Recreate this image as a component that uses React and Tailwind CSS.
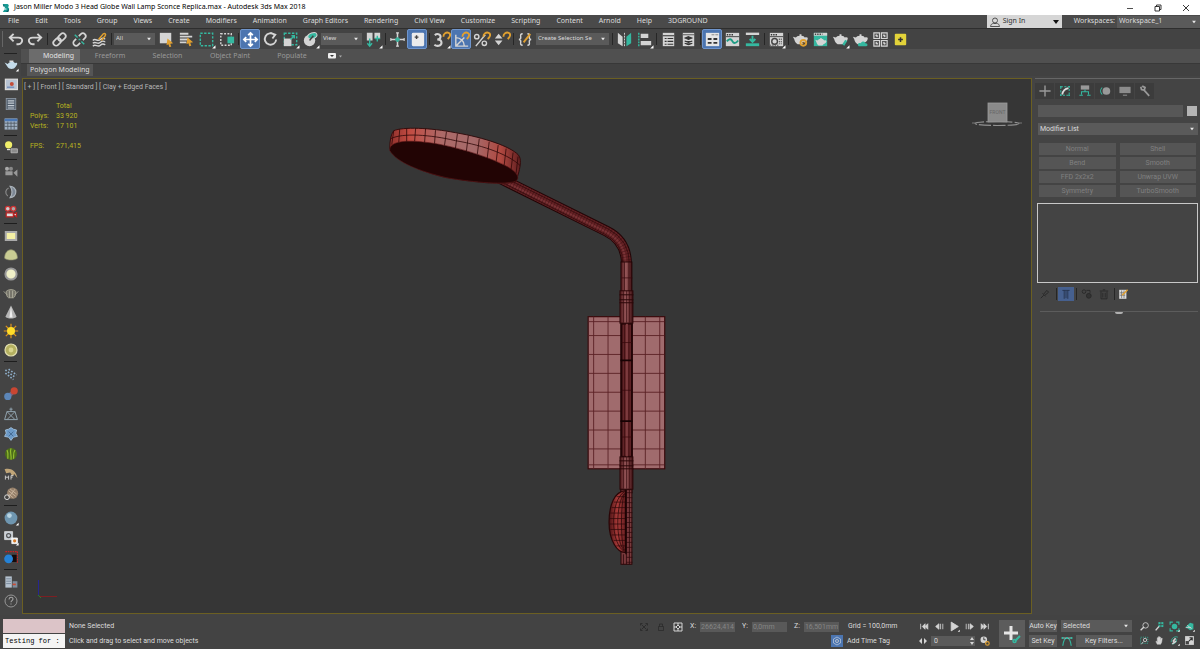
import React from "react";

const W = "#d4d4d4";
const T = "#35b8a0";
const O = "#e0a030";

function Icon({ children, size = "size-5", label }) {
  return (
    <svg viewBox="0 0 20 20" className={`${size} shrink-0`} fill="none" stroke={W} strokeWidth="1.5" aria-label={label} role="img">
      {children}
    </svg>
  );
}

const Corner = () => <path d="M19.500 16v3.500h-3.500z" fill="#fff" stroke="none" />;
const Teapot = ({ fill = W }) => (
  <path d="M2 7l3 1c1-1 2-2 4-2V4.500h2V6c2 0 3 1 3.500 2 3-1 4 .5 2.500 3-.8 1.300-2 2-3.500 2.500L12 15H7c-2-1-3-3-3.500-5z" fill={fill} stroke="none" />
);
const Win = () => (
  <>
    <rect x="3" y="3" width="14" height="14" fill={W} stroke="none" />
    <path d="M4 5h1.500M6.500 5H8M9 5h1.500" stroke="#333" strokeWidth="1.500" />
    <path d="M3 7h14" stroke="#444" strokeWidth="1" />
  </>
);
const Magnet = () => <path d="M10 7c0-3 3-5 5.500-4s2 4-1 6.500" stroke={O} strokeWidth="2" />;

const toolIcons = {
  Undo: <path d="M4 8h9c3 0 4 2 4 3s-1 4-4 4h-2M8 4L4 8l4 4" strokeWidth="2" />,
  Redo: <path d="M16 8H7c-3 0-4 2-4 3s1 4 4 4h2M12 4l4 4-4 4" strokeWidth="2" />,
  Link: (
    <g transform="rotate(-45 10 10)" strokeWidth="1.8">
      <rect x="2" y="7" width="9" height="6" rx="3" />
      <rect x="9" y="7" width="9" height="6" rx="3" />
    </g>
  ),
  Unlink: (
    <>
      <g transform="rotate(-45 10 10)" strokeWidth="1.800">
        <path d="M8 7H5a3 3 0 0 0 0 6h3M12 7h3a3 3 0 0 1 0 6h-3" />
      </g>
      <path d="M5 5l3 3M12 12l3 3M9 10h2" stroke={T} />
    </>
  ),
  "Bind to Space Warp": (
    <>
      <path d="M3 11c3-3 5 2 8-1s4 0 5-1M3 14c3-3 5 2 8-1s4 0 5-1M3 17c3-3 5 2 8-1s4 0 5-1" />
      <path d="M9 10l5-6c2-1 3 1 2 2l-4 5" stroke={O} />
    </>
  ),
  "Select Object": (
    <>
      <rect x="3" y="3" width="12" height="11" fill={W} stroke="none" />
      <path d="M11 9l6 5-3 .5 1 3-2 .5-1-3-2 1z" fill={O} stroke="none" />
    </>
  ),
  "Select by Name": (
    <>
      <path d="M3 4h9M3 7h13M3 10h9M3 13h7" strokeWidth="2" />
      <path d="M11 8l6 5-3 .5 1 3-2 .5-1-3-2 1z" fill={O} stroke="none" />
    </>
  ),
  "Rectangular Region": (
    <>
      <rect x="3.500" y="3.500" width="13" height="13" stroke={T} strokeDasharray="2.500 1.500" />
      <Corner />
    </>
  ),
  "Window Crossing": (
    <>
      <rect x="4" y="4" width="11" height="12" strokeDasharray="2 1.500" />
      <rect x="11" y="7" width="7" height="7" fill={T} stroke="none" />
    </>
  ),
  Move: <path d="M10 3v14M3 10h14M7.500 5.500L10 3l2.500 2.500M7.500 14.500L10 17l2.500-2.500M5.500 7.500L3 10l2.500 2.500M14.500 7.500L17 10l-2.500 2.500" stroke="#fff" strokeWidth="1.800" />,
  Rotate: <path d="M14 5a6 6 0 1 0 2 5M10 3l5 2-3 4" strokeWidth="2" />,
  Scale: (
    <>
      <rect x="3.500" y="3.500" width="13" height="12" stroke={T} strokeDasharray="2.500 1.500" />
      <rect x="3" y="9" width="8" height="8" fill={W} stroke="none" />
      <path d="M10 10l4-4M11 6h3v3" stroke={T} />
      <Corner />
    </>
  ),
  Place: (
    <>
      <circle cx="9" cy="11" r="6" fill={W} stroke="none" />
      <ellipse cx="12" cy="6" rx="5" ry="3" fill={T} stroke={W} strokeWidth="1" transform="rotate(-20 12 6)" />
      <path d="M9 11l4-5" stroke="#444" />
      <Corner />
    </>
  ),
  "Pivot Center": (
    <>
      <path d="M3 3h6v8H3zM11 3h6v6h-6z" fill={W} stroke="none" />
      <path d="M6 9v8M3.500 14L6 17l2.500-3M14 12V6M11.500 9H17" stroke={T} />
      <Corner />
    </>
  ),
  Manipulate: (
    <>
      <path d="M10 3v14M3 10h14" strokeWidth="1.600" />
      <path d="M7.500 10h5M10 7.500v5" stroke={T} strokeWidth="2" />
      <path d="M3 8.500v3M17 8.500v3M8.500 3h3M8.500 17h3" strokeWidth="1.200" />
    </>
  ),
  "Keyboard Override": (
    <>
      <rect x="4" y="3" width="13" height="14" rx="1.500" fill="#ececec" stroke="none" />
      <path d="M9 5.500v4M7 7.500h4" stroke="#444" />
    </>
  ),
  "Snap Toggle": (
    <>
      <path d="M3 5.500c2-2 6-1.500 6 1.500 0 2-2 3-3.500 3C8 10 10 11 10 13.500c0 3.500-5 4-7.500 2" strokeWidth="2.200" />
      <g transform="translate(2 0)"><Magnet /></g>
      <Corner />
    </>
  ),
  "Angle Snap": (
    <>
      <path d="M4 5v12h13M4 17L13 8M4 8c5 0 9 4 9 9" strokeWidth="1.500" />
      <g transform="translate(1 0)"><Magnet /></g>
    </>
  ),
  "Percent Snap": (
    <>
      <circle cx="5" cy="7" r="2.300" />
      <circle cx="13" cy="14" r="2.300" />
      <path d="M4 17L14 5" />
      <g transform="translate(2 0)"><Magnet /></g>
    </>
  ),
  "Spinner Snap": (
    <>
      <path d="M3 9l4-5 4 5zM3 11l4 5 4-5z" fill={W} stroke="none" />
      <g transform="translate(2 0)"><Magnet /></g>
    </>
  ),
  "Edit Selection Sets": (
    <>
      <path d="M7 4c-3 0-2 2-2 4 0 1-1 2-2 2 1 0 2 1 2 2 0 2-1 4 2 4M12 4c3 0 2 2 2 4 0 1 1 2 2 2-1 0-2 1-2 2 0 2 1 4-2 4" />
      <path d="M8 13l7-9" stroke={O} strokeWidth="2" />
    </>
  ),
  Mirror: (
    <>
      <path d="M3 3l5 4v10l-5-3z" fill={W} stroke="none" />
      <path d="M17 3l-5 4v10l5-3z" fill={T} stroke="none" />
      <path d="M10 3v14" strokeDasharray="2 1" strokeWidth="1" />
    </>
  ),
  Align: (
    <>
      <path d="M4 3v14" stroke={T} strokeDasharray="2 1" />
      <path d="M6 4h8v4.500H6zM6 11.500h11V16H6z" fill={W} stroke="none" />
      <Corner />
    </>
  ),
  "Layer Explorer": (
    <>
      <rect x="4" y="3" width="12" height="14" fill={W} stroke="none" />
      <path d="M4 6h12M6 9h2M6 12h2M6 15h2M9 9h6M9 12h6M9 15h6" stroke="#333" strokeWidth="1.200" />
    </>
  ),
  "Toggle Layers": (
    <>
      <rect x="4" y="3" width="12" height="14" fill={W} stroke="none" />
      <path d="M4 5h12" stroke="#555" strokeWidth="1" />
      <path d="M10 7l3.500 1.500L10 10 6.500 8.500zM6 11.500l4 1.500 4-1.500M6 14l4 1.500L14 14" fill="#333" stroke="#333" strokeWidth="1.200" />
    </>
  ),
  "Toggle Ribbon": (
    <>
      <rect x="3" y="3" width="14" height="14" fill="#e6e6e6" stroke="none" />
      <path d="M9 5h7" stroke="#888" strokeWidth="1" strokeDasharray="3 1" />
      <path d="M5 9.500h4M11 9.500h4M5 13.500h4M11 13.500h4" stroke="#333" strokeWidth="2" />
    </>
  ),
  "Curve Editor": (
    <>
      <Win />
      <path d="M4 12c3-4 5-2 6 0s3 3 6-1" stroke="#1e9c84" strokeWidth="2" />
    </>
  ),
  "Schematic View": (
    <>
      <path d="M3 4h14" strokeWidth="2.500" />
      <path d="M3 15.500h14" stroke={T} strokeWidth="3" />
      <path d="M10 6v6M7 9.500l3 3 3-3" stroke={T} strokeWidth="2" />
    </>
  ),
  "Material Editor": (
    <>
      <Win />
      <circle cx="8" cy="12" r="3" stroke="#444" />
      <path d="M13 9v6M15 9v6M3 16h9" stroke="#444" strokeWidth="1" strokeDasharray="1.500 1" />
      <Corner />
    </>
  ),
  "Render Setup": (
    <>
      <Teapot />
      <circle cx="13" cy="13.500" r="3" stroke={O} strokeWidth="2" />
      <circle cx="13" cy="13.500" r="1.200" fill="#8a5c12" stroke="none" />
    </>
  ),
  "Rendered Frame": (
    <>
      <rect x="3" y="3" width="14" height="14" fill={T} stroke="none" />
      <path d="M3 4.500h14" strokeWidth="3" />
      <path d="M4 4.500h8" stroke="#444" strokeDasharray="1.500 1" />
      <g transform="translate(3 5) scale(.75)"><Teapot /></g>
    </>
  ),
  Render: (
    <>
      <Teapot />
      <path d="M13 16l3-5" stroke={T} strokeWidth="2.500" />
      <Corner />
    </>
  ),
  "Cloud Render": (
    <>
      <Teapot />
      <path d="M8 17c-2-3 1-4 2-3 2-3 5-2 5 0 3 0 3 3 1 3z" fill={T} stroke="none" />
    </>
  ),
  Gallery: (
    <>
      <path d="M3 3h6v6H3zM11 3h6v6h-6zM3 11h6v6H3zM11 11h6v6h-6z" fill="#555" strokeWidth="1.200" />
      <path d="M5 5l2 2M13 5l2 2M5 13l2 2M13 13l2 2" strokeWidth="1.800" />
    </>
  ),
  "3DGROUND tools": (
    <>
      <rect x="4" y="4" width="12" height="12" rx="1" fill="#e3d33a" stroke="none" />
      <path d="M10 7.500v5M7.500 10h5" stroke="#333" strokeWidth="1.600" />
    </>
  ),
};

function Tool({ name, active }) {
  return (
    <button
      aria-label={name}
      className={`flex size-5 shrink-0 items-center justify-center ${active ? "rounded-xs border border-[#6f95cc] bg-[#4c75b0]" : ""}`}
    >
      <Icon size="size-[19px]" label={name}>{toolIcons[name]}</Icon>
    </button>
  );
}

const Tools = ({ names, active = [] }) => names.map((n) => <Tool key={n} name={n} active={active.includes(n)} />);
const Sep = () => (
  <span className="flex w-1 shrink-0 justify-center">
    <span className="h-3 w-px bg-[#262626]" />
  </span>
);

function Combo({ label, value, className }) {
  return (
    <span className={`relative block shrink-0 ${className}`}>
      <select aria-label={label} className="block size-full appearance-none bg-[#5a5a5a] px-[2px] text-[#dadada] outline-none">
        <option>{value}</option>
      </select>
      <svg viewBox="0 0 4 3" className="pointer-events-none absolute top-1/2 right-1 h-[3px] w-1 -translate-y-1/2">
        <path d="M0 0h4L2 3z" fill="#e8e8e8" />
      </svg>
    </span>
  );
}

const menus = ["File", "Edit", "Tools", "Group", "Views", "Create", "Modifiers", "Animation", "Graph Editors", "Rendering", "Civil View", "Customize", "Scripting", "Content", "Arnold", "Help", "3DGROUND"];

function TitleBar() {
  return (
    <header className="flex h-[15px] items-center bg-white pl-[2px] text-black">
      <svg viewBox="0 0 10 12" className="mr-1 h-3 w-2" aria-hidden="true">
        <path d="M1 1h5c3 0 3 3 1.500 4C10 6 9 11 5 11H1l2-3h2c1 0 1-1.500 0-1.500H3L4 4H2z" fill="#169a94" />
        <path d="M1 1l3 3H2zM5 11l4-4-1 4z" fill="#0b5f66" />
      </svg>
      <h1 className="font-['Noto_Sans',sans-serif] text-[7px]">Jason Miller Modo 3 Head Globe Wall Lamp Sconce Replica.max - Autodesk 3ds Max 2018</h1>
      <div className="ml-auto flex gap-5 pr-[10px]">
        <button aria-label="Minimize"><svg viewBox="0 0 8 8" className="size-2"><path d="M1 4.500h6" stroke="#222" strokeWidth=".8" /></svg></button>
        <button aria-label="Restore"><svg viewBox="0 0 8 8" className="size-2" fill="none" stroke="#222" strokeWidth=".9"><path d="M1 2.500h4.500V7H1zM2.500 2.500V1H7v4.500H5.500" /></svg></button>
        <button aria-label="Close"><svg viewBox="0 0 8 8" className="size-2" stroke="#222" strokeWidth=".9"><path d="M1 1l6 6M7 1L1 7" /></svg></button>
      </div>
    </header>
  );
}

function MenuBar() {
  return (
    <nav className="flex h-[14px] items-center border-b border-[#2e2e2e] bg-[#4a4a4a] pl-2 font-['Noto_Sans',sans-serif] text-[7px] text-[#dedede]">
      <div className="flex gap-4">
        {menus.map((m) => <button key={m} className="whitespace-nowrap">{m}</button>)}
      </div>
      <button className="ml-auto flex h-full w-[75px] items-center bg-[#d6d6d6] px-[3px] text-[#333]">
        <svg viewBox="0 0 10 10" className="mr-[3px] size-[10px]" fill="none" stroke="#444" strokeWidth=".9"><circle cx="5" cy="3.500" r="2.500" /><path d="M.5 9.500C1 6.500 3 6.500 3.500 6.500h3c1 0 2.500 0 3 3z" /></svg>
        Sign In
        <svg viewBox="0 0 6 4" className="ml-auto h-1 w-[6px]"><path d="M0 0h6L3 4z" fill="#111" /></svg>
      </button>
      <label className="ml-3 flex h-full items-center gap-[2px]">
        Workspaces:
        <Combo label="Workspaces" value="Workspace_1" className="h-3 w-[83px]" />
      </label>
    </nav>
  );
}

function MainToolbar() {
  return (
    <div className="flex h-5 items-center bg-[#434343] pl-[2px] font-['Noto_Sans',sans-serif] text-[6px]">
      <span className="mr-[2px] h-4 w-px bg-[#666]" />
      <Tools names={["Undo", "Redo"]} />
      <Sep />
      <Tools names={["Link", "Unlink", "Bind to Space Warp"]} />
      <Sep />
      <Combo label="Selection filter" value="All" className="mx-px mb-px h-3 w-[41px]" />
      <Tools names={["Select Object", "Select by Name", "Rectangular Region", "Window Crossing"]} />
      <Sep />
      <Tools names={["Move", "Rotate", "Scale", "Place"]} active={["Move"]} />
      <Combo label="Reference coordinate system" value="View" className="mx-px mb-px h-3 w-[41px]" />
      <Tools names={["Pivot Center"]} />
      <Sep />
      <Tools names={["Manipulate", "Keyboard Override"]} active={["Keyboard Override"]} />
      <Sep />
      <Tools names={["Snap Toggle", "Angle Snap", "Percent Snap", "Spinner Snap"]} active={["Angle Snap"]} />
      <Sep />
      <Tools names={["Edit Selection Sets"]} />
      <Combo label="Named selection sets" value="Create Selection Se" className="mx-px mb-px h-3 w-[73px]" />
      <Sep />
      <Tools names={["Mirror", "Align"]} />
      <Sep />
      <Tools names={["Layer Explorer", "Toggle Layers"]} />
      <Sep />
      <Tools names={["Toggle Ribbon", "Curve Editor", "Schematic View"]} active={["Toggle Ribbon"]} />
      <Sep />
      <Tools names={["Material Editor"]} />
      <Sep />
      <Tools names={["Render Setup", "Rendered Frame", "Render", "Cloud Render", "Gallery", "3DGROUND tools"]} />
    </div>
  );
}

function Ribbon() {
  return (
    <div className="font-['Noto_Sans',sans-serif] text-[7px]">
      <div className="flex h-[14px] items-center bg-[#505050] pl-2 text-[#999]">
        <button className="h-full w-[51px] bg-[#6c6c6c] pl-2 text-[#e2e2e2]">Modeling</button>
        <button className="w-[60px]">Freeform</button>
        <button className="w-[55px]">Selection</button>
        <button className="w-[70px]">Object Paint</button>
        <button className="w-[54px]">Populate</button>
        <button aria-label="Ribbon options" className="ml-2">
          <svg viewBox="0 0 16 6" className="h-[6px] w-4"><rect x="1" width="8" height="5.500" rx="1" fill="#eee" /><path d="M3 2h4L5 4z" fill="#333" /><path d="M12 2.500h3l-1.500 2z" fill="#aaa" /></svg>
        </button>
      </div>
      <div className="flex h-[13px] items-start border-t border-[#383838] bg-[#414141] pl-[6px]">
        <button className="h-3 bg-[#555] px-[3px] leading-3 whitespace-nowrap text-[#dcdcdc]">Polygon Modeling</button>
      </div>
    </div>
  );
}

const sideGroups = [
  {
    gap: "gap-px",
    items: [
      ["Teapot render", <><path d="M2 8l4 2c2-3 7-4 9-1 3-2 4 1 1 4-2 4-8 4-10 1z" fill="#c5dcea" stroke="none" /><path d="M8 6.500h5" stroke="#fff" /><Corner /></>],
      ["Frame buffer", <><rect x="3" y="4" width="15" height="13" fill="#b8c4d4" stroke="#ddd" /><circle cx="11" cy="10" r="2.500" fill="#c34d3a" stroke="none" /><path d="M5 14h9" stroke="#6b88b8" /></>],
      ["List", <><rect x="4" y="3" width="12" height="14" fill="#53606f" stroke="#909aa5" strokeWidth="1" /><path d="M6 6h8M6 9h8M6 12h8M6 15h8" stroke="#c5ccd4" /></>],
      ["Table", <><rect x="2" y="3" width="16" height="14" fill="#9fb0c2" stroke="none" /><path d="M2 5h16" stroke="#4b78b5" strokeWidth="3" /><path d="M2 9h16M2 13h16M6 7v10M10 7v10M14 7v10" stroke="#4e5862" strokeWidth="1" /></>],
    ],
  },
  {
    items: [["Light lister", <><circle cx="7" cy="6" r="4.500" fill="#f1ef6a" stroke="none" /><path d="M5 12h4" stroke="#ddd" /><path d="M10 11h8v5h-8z" fill="#8c8c8c" stroke="#bbb" strokeWidth="1" /></>]],
  },
  {
    gap: "gap-px",
    items: [
      ["Camera", <><circle cx="5" cy="6" r="2.500" fill="#aaa" stroke="none" /><circle cx="10" cy="6" r="2.500" fill="#888" stroke="none" /><path d="M3 9h9v5H3zM13 11l5-4v9z" fill="#999" stroke="none" /></>],
      ["Half sphere", <><path d="M9 3a7 7 0 0 1 0 14c3-4 3-10 0-14z" fill="#7c8794" stroke="#aab2ba" /><path d="M7 5c-4 2-5 7-1 10" stroke="#888" /></>],
      ["Camera red", <><circle cx="6" cy="6" r="3" fill="#ccc" stroke="#c33" /><circle cx="13" cy="6" r="3" fill="#aaa" stroke="#c33" /><path d="M4 11h9v5H4zM13 13l4-2v5z" fill="#ddd" stroke="#b22" /></>],
    ],
  },
  {
    items: [
      ["Plane light", <><rect x="3.500" y="5" width="13" height="10" fill="#f4f0a5" stroke="#aaa" strokeWidth="2.500" /></>],
      ["Dome light", <><path d="M2 14c0-14 16-14 16 0-3 3-13 3-16 0z" fill="#c9cc93" stroke="#8f9170" strokeWidth=".8" /></>],
      ["Sphere light", <><circle cx="10" cy="10" r="7" fill="#f0f0c8" stroke="#999" strokeWidth="2.500" /></>],
      ["Mesh light", <><path d="M4 8c3-3 9-3 12 0 0 4-1 7-3 8H7c-2-1-3-4-3-8z" fill="#77756b" stroke="#b0ae9c" strokeWidth="1" /><path d="M8 7v9M12 7v9M1 8l4 4M19 8l-4 4" stroke="#b8b6a4" strokeWidth="1" /></>],
      ["Spot light", <><path d="M10 2l7 14c-2 3-12 3-14 0z" fill="#b5b5b5" stroke="none" /><path d="M10 3l2 14H8z" fill="#eee" stroke="none" /></>],
      ["Sun", <><path d="M10 1v18M1 10h18M3.500 3.500l13 13M16.500 3.500l-13 13" stroke="#e0941c" strokeWidth="1.500" /><circle cx="10" cy="10" r="5" fill="#ffdc28" stroke="none" /></>],
      ["Ambient light", <><circle cx="10" cy="10" r="7.500" fill="#b4b060" stroke="#e2dfb0" /><circle cx="10" cy="10" r="3" fill="#d8d48c" stroke="none" /></>],
    ],
  },
  {
    gap: "gap-px",
    items: [
      ["Particles", <><path d="M3 5l12 9M7 4l10 7M3 9l10 8" stroke="#8fb0cc" strokeWidth="2" strokeDasharray="2 2" /></>],
      ["Metaballs", <><path d="M6 14l8-8" stroke="#7b627c" strokeWidth="5" /><circle cx="6" cy="13" r="4.500" fill="#5c86b8" stroke="none" /><circle cx="14" cy="6" r="4.500" fill="#c94632" stroke="none" /></>],
      ["Cage", <><path d="M5 7h10l3 10H2zM10 2v5M5 7l10 10M15 7L5 17M8 4h4" stroke="#92a4b0" strokeWidth="1.200" /></>],
      ["Scatter", <><path d="M10 2l3 2 4 1-1 4 2 4-5 1-3 4-3-4-5-1 2-4-1-4 4-1z" fill="#6d9ac6" stroke="#aac8e2" strokeWidth="1" /><path d="M7 7l6 6M13 7l-6 6" stroke="#3e628a" strokeWidth="1" /></>],
      ["Grass", <><circle cx="10" cy="10" r="7.500" fill="#4c6d1a" stroke="none" /><path d="M5 5c2 4 1 8 1 11M10 3c-2 5 1 8 0 14M15 5c-3 4-1 8-2 11" stroke="#93bd30" /></>],
      ["Hair and fur", <><path d="M2 4c7-2 14 1 16 11l-4-5-2 3-3-5-5 1z" fill="#c0a578" stroke="none" /><path d="M3 12v5M3 14h4M7 12v5M10 17v-5h3M10 14h2" stroke="#ccc" strokeWidth="1.200" /></>],
      ["Ornatrix", <><circle cx="12" cy="9" r="7" fill="#96806a" stroke="none" /><path d="M7 6l9 7M9 4l8 6M7 10l6 5M15 4l-7 9" stroke="#d0bda4" strokeWidth="1" /><circle cx="5" cy="14" r="3" stroke="#ddd" strokeWidth="1.200" /></>],
    ],
  },
  {
    gap: "gap-px",
    items: [
      ["Material ball", <><circle cx="10" cy="10" r="8" fill="#6f96b0" stroke="none" /><circle cx="8" cy="7" r="3" fill="#b8d4e2" stroke="none" /><Corner /></>],
      ["Material assign", <><path d="M2 2h10v10H2z" fill="#c9d0d8" stroke="#ddd" strokeWidth="1" /><circle cx="7" cy="7" r="2.500" stroke="#555" /><path d="M11 10h7v7h-7z" fill="#eee" stroke="#fff" strokeWidth="1" /><circle cx="14.500" cy="13.500" r="2" fill="#d77b28" stroke="none" /><Corner /></>],
      ["Region render", <><path d="M3 2h15v15" stroke="#c22" strokeDasharray="2 1" /><rect x="11" y="6" width="6" height="9" fill="#150a0a" stroke="none" /><circle cx="7" cy="11" r="5.500" fill="#2582d6" stroke="none" /></>],
    ],
  },
  {
    items: [
      ["Converter", <><rect x="3" y="3" width="8" height="14" fill="#b5c2cf" stroke="none" /><path d="M4 6h6M4 9h6M4 12h6" stroke="#6d7e90" strokeWidth="1" /><path d="M12 9h6v8h-6z" fill="#7f8d9c" stroke="none" /><path d="M12 13h4" stroke="#d04a30" strokeWidth="2" /></>],
      ["Help", <><circle cx="10" cy="10" r="7.500" stroke="#999" strokeWidth="1.200" /><path d="M7.500 8c0-3.500 5-3.500 5-.5 0 2-2.500 2-2.500 4M10 13v1.500" stroke="#aaa" strokeWidth="1.300" /></>],
    ],
  },
];

function SideToolbar() {
  return (
    <aside className="w-[21px] shrink-0 bg-[#444] pt-1">
      <div className="mx-1 h-px bg-[#222]" />
      {sideGroups.map((g, i) => (
        <React.Fragment key={i}>
          {i > 0 && <div className="flex h-[5px] items-center px-1"><span className="h-px w-full bg-[#1d1d1d]" /></div>}
          <div className={`flex flex-col items-center ${g.gap || ""}`}>
            {g.items.map(([name, art]) => (
              <button key={name} aria-label={name} className="flex h-[19px] w-full items-center justify-center">
                <Icon size="size-4" label={name}>{art}</Icon>
              </button>
            ))}
          </div>
        </React.Fragment>
      ))}
    </aside>
  );
}

const plateRows = [322, 336, 355, 374, 393, 412, 431, 450, 466];
const plateCols = [594, 608.5, 646, 660.5];
const rimLines = [
  [393, 130, 391, 144], [399, 128.500, 398, 142], [406, 128, 406, 141], [415, 127.500, 414, 140.500], [425, 128, 424, 142],
  [435, 129.500, 434, 143], [446, 131, 444, 145], [457, 133, 455, 148], [468, 135, 466, 151], [479, 138, 477, 154],
  [489, 141, 487, 157.500], [498, 144.500, 496, 161], [506, 148, 504, 165], [513, 152, 511, 169], [518, 156, 516, 173],
];

function Lamp() {
  return (
    <svg viewBox="22 78 1010 537" className="absolute inset-0 size-full" role="img" aria-label="Wall lamp wireframe">
      <defs>
        <linearGradient id="rim" x1="0" x2="1">
          <stop offset="0" stopColor="#8f302c" /><stop offset=".15" stopColor="#c24c42" /><stop offset=".4" stopColor="#ad6a68" />
          <stop offset=".65" stopColor="#a56a6a" /><stop offset=".85" stopColor="#b04840" /><stop offset="1" stopColor="#611f20" />
        </linearGradient>
        <linearGradient id="tube" x1="0" x2="1">
          <stop offset="0" stopColor="#4d1619" /><stop offset=".45" stopColor="#97585a" /><stop offset="1" stopColor="#3c0e11" />
        </linearGradient>
        <linearGradient id="shade" x1="0" x2="1">
          <stop offset="0" stopColor="#4a1214" /><stop offset=".5" stopColor="#a73a38" /><stop offset="1" stopColor="#6a2022" />
        </linearGradient>
      </defs>

      <g fill="none" strokeLinejoin="round">
        <path d="M500 178L607 231Q627 241 627 264V296" stroke="#220506" strokeWidth="11" />
        <path d="M500 178L607 231Q627 241 627 264V296" stroke="#642124" strokeWidth="9" />
        <path d="M500 179L607 232Q626 242 626 264" stroke="#793336" strokeWidth="2" />
        <path d="M500 178L607 231Q627 241 627 264" stroke="#2e0a0c" strokeWidth="9" strokeDasharray=".7 2.300" opacity=".5" />
        <path d="M502 176L609 229Q630 240 630 264V296M500 181L605 234Q623.500 243 623.500 264V296" stroke="#2c090a" strokeWidth=".7" />
      </g>

      <path d="M389 148C389 140 390 134 393 130C402 126 430 127 455 132C485 137 510 146 518 154C522 158 520 166 519 171L516 181C505 185 475 182 445 177C420 171 398 161 389 148Z" fill="url(#rim)" stroke="#2e0808" strokeWidth=".9" />
      <path d="M389 150C388 141 404 139 424 141.500C450 144 488 156 505 165C517 171 521 178 515 181C503 185 466 181 445 177C420 171 396 162 389 150Z" fill="#220404" stroke="#5a1618" strokeWidth=".6" />
      <path d="M390 138C402 132 430 134 455 140C485 145 510 155 520 165" fill="none" stroke="#2e0808" strokeWidth=".8" />
      {rimLines.map(([a, b, c, d]) => <line key={a} x1={a} y1={b} x2={c} y2={d} stroke="#2e0808" strokeWidth=".8" />)}

      <rect x="588.500" y="317" width="77" height="153" fill="#a06b6d" stroke="#3a0a0c" strokeWidth="1.200" />
      <g stroke="#592024" strokeWidth=".9">
        {plateRows.map((y) => <line key={y} x1="589" x2="665" y1={y} y2={y} />)}
        {plateCols.map((x) => <line key={x} x1={x} x2={x} y1="317" y2="470" />)}
      </g>

      <rect x="621.500" y="262" width="11" height="232" fill="url(#tube)" stroke="#230506" strokeWidth="1" />
      <rect x="622" y="324" width="10.500" height="134" fill="#632629" stroke="#230406" strokeWidth="2" />
      <path d="M627.500 324V458" stroke="#7c3b3e" strokeWidth="2" />
      <path d="M625 262V458M629.500 262V458" stroke="#35090c" strokeWidth=".7" />
      <path d="M622 278h11M622 343h11M622 391h11M622 438h11" stroke="#35090c" strokeWidth=".7" />
      <path d="M621 361h12M621 422h12" stroke="#160203" strokeWidth="1.800" />
      {[291, 458].map((y) => (
        <g key={y}>
          <rect x="620.500" y={y} width="13" height="32.500" fill="url(#tube)" stroke="#2a0708" strokeWidth="1" />
          <path d={`M624 ${y}v32M627 ${y}v32M630 ${y}v32`} stroke="#3a0d10" strokeWidth=".7" />
          <path d={`M620 ${y + 4}h14M620 ${y + 9}h14M620 ${y + 12}h14`} stroke="#2a0708" strokeWidth="1" />
        </g>
      ))}

      <rect x="621.500" y="491" width="11" height="75" fill="#78393c" stroke="#2a0708" strokeWidth="1" />
      <path d="M627 491v75M630 491v75M624 556v10" stroke="#2c090b" strokeWidth=".8" />
      {Array.from({ length: 15 }, (_, i) => <line key={i} x1="627" x2="633" y1={494 + i * 5} y2={494 + i * 5} stroke="#2c090b" strokeWidth=".7" />)}
      <path d="M626 492C615 493 609.500 506 609.500 524C609.500 542 618 555 626 554Z" fill="url(#shade)" stroke="#2a0506" strokeWidth="1.200" />
      <path d="M625 493C610 502 611 546 625 553M625 495C616 504 616 545 625 552M625 495C621 504 621 545 625 552" fill="none" stroke="#2c0709" strokeWidth=".8" />
      {Array.from({ length: 10 }, (_, i) => {
        const y = 498 + i * 5.500;
        const inset = Math.pow(Math.abs(y - 523) / 31, 2) * 11;
        return <line key={i} x1={610 + inset} x2="626" y1={y} y2={y} stroke="#2c0709" strokeWidth=".7" />;
      })}
      <path d="M626.500 491V556" stroke="#190304" strokeWidth="1.300" />
    </svg>
  );
}

function Viewport() {
  return (
    <main className="relative mt-[2px] mb-px min-w-0 flex-1 overflow-hidden border border-[#6b5f22] bg-[#363636] font-['Roboto',sans-serif] text-[7px]">
      <Lamp />
      <div className="relative pt-[3px] pl-px leading-[10px] whitespace-nowrap text-[#b8b8b8]">[ + ] [ Front ] [ Standard ] [ Clay + Edged Faces ]</div>
      <dl className="relative mt-[9px] ml-[7px] grid w-max grid-cols-[26px_auto] leading-[10px] text-[#b9b420]">
        <dt /><dd>Total</dd>
        <dt>Polys:</dt><dd>33 920</dd>
        <dt>Verts:</dt><dd>17 101</dd>
        <dt className="pt-[10px]">FPS:</dt><dd className="pt-[10px]">271,415</dd>
      </dl>
      <svg viewBox="0 0 52 26" className="absolute top-[22px] right-2 h-[26px] w-[52px]" aria-label="View cube">
        <ellipse cx="26" cy="22.500" rx="22" ry="2" fill="none" stroke="#909090" strokeWidth="1.200" strokeDasharray="12 2" />
        <path d="M1 22h4M47 22h4" stroke="#777" />
        <rect x="17" y="2" width="19" height="19" fill="#8a8a8a" stroke="#9b9b9b" strokeWidth=".8" />
        <text x="26.500" y="13" fontSize="5" textAnchor="middle" fill="#666">FRONT</text>
      </svg>
      <svg viewBox="0 0 26 24" className="absolute bottom-3 left-3 h-6 w-[26px]" aria-hidden="true">
        <path d="M3.500 19V3" stroke="#26268f" /><path d="M4 19.500h18" stroke="#7c1f22" /><path d="M3 18l3 3" stroke="#2c7a2c" />
      </svg>
    </main>
  );
}

const panelTabs = [
  ["Create", <path d="M10 2v16M2 10h16" strokeWidth="2" stroke="#999" />],
  ["Modify", <><rect x="4" y="4" width="12" height="12" stroke={T} strokeDasharray="3 2" /><path d="M6 15c1-5 4-8 9-9" stroke="#ddd" strokeWidth="2.500" /><path d="M3 3h2v2H3zM15 3h2v2h-2zM3 15h2v2H3zM15 15h2v2h-2z" fill={T} stroke="none" /></>],
  ["Hierarchy", <><path d="M4 2h12v6H4z" fill="#999" stroke="none" /><path d="M10 8v3M5 15v-4h10v4M2 16h5M13 16h5" stroke={T} /></>],
  ["Motion", <><circle cx="12" cy="10" r="5.500" fill="#999" stroke="none" /><path d="M6 5c-3 3-3 7 0 10" stroke={T} /></>],
  ["Display", <><path d="M2 4h16v9H2z" fill="#8c8c8c" stroke="none" /><path d="M7 16h6" stroke="#8c8c8c" /></>],
  ["Utilities", <path d="M8 8l8 9M4 4l1 4 4 1 1-4-4-2" stroke="#999" strokeWidth="2.500" />],
];

function CommandPanel() {
  return (
    <aside className="mt-[2px] ml-[3px] w-[165px] shrink-0 border-t border-[#666] bg-[#444] font-['Roboto',sans-serif] text-[7px] text-[#dcdcdc]">
      <div className="flex h-6 items-center">
        {panelTabs.map(([name, art]) => (
          <button key={name} aria-label={name} className="mr-px flex h-4 w-[19px] items-center justify-center bg-[#3c3c3c]">
            <Icon size="size-[14px]" label={name}>{art}</Icon>
          </button>
        ))}
      </div>
      <div className="flex items-center gap-1 pt-[2px] pr-[3px] pl-[3px]">
        <input aria-label="Object name" className="h-3 min-w-0 flex-1 bg-[#575757]" />
        <button aria-label="Object color" className="size-[10px] bg-[#b4b4b4]" />
      </div>
      <div className="pt-[6px] pr-[2px] pl-[3px]">
        <Combo label="Modifier List" value="Modifier List" className="h-3" />
      </div>
      <div className="grid grid-cols-2 gap-x-1 gap-y-[2px] pt-2 pr-1 pl-1 text-[#808080]">
        {["Normal", "Shell", "Bend", "Smooth", "FFD 2x2x2", "Unwrap UVW", "Symmetry", "TurboSmooth"].map((n) => (
          <button key={n} disabled className="h-3 bg-[#555] leading-3">{n}</button>
        ))}
      </div>
      <div className="mt-[6px] mr-[2px] ml-[2px] h-20 border border-[#c8c8c8]" />
      <div className="flex h-[22px] items-center pl-px">
        <button aria-label="Pin stack" className="flex w-[18px] justify-center"><Icon size="size-3"><path d="M3 17l5-5M6 9l5 5M8 10l5-6 3 3-6 5" stroke="#262626" /></Icon></button>
        <Sep />
        <button aria-label="Show end result" className="flex h-[14px] w-4 items-center justify-center bg-[#46608f]"><Icon size="size-3"><path d="M4 4h12M7 4v14M13 4v14M10 5v12" stroke="#26334d" /></Icon></button>
        <Sep />
        <button aria-label="Make unique" className="flex w-[18px] justify-center"><Icon size="size-3"><circle cx="5" cy="6" r="3" stroke="#282828" /><circle cx="13" cy="13" r="4" fill="#333" stroke="#282828" /><path d="M9 4h6v4" stroke="#282828" /></Icon></button>
        <button aria-label="Remove modifier" className="flex w-4 justify-center"><Icon size="size-3"><path d="M3 5h14M8 3h4M5 6v12h10V6M8 8v8M12 8v8" stroke="#282828" /></Icon></button>
        <Sep />
        <button aria-label="Configure sets" className="flex w-4 justify-center"><Icon size="size-3"><path d="M2 3h12v15H2z" fill="#ddd" stroke="none" /><path d="M3 8h9M3 12h9M6 4v13M10 4v13" stroke="#555" strokeWidth="1" /><path d="M7 12l9-9" stroke={O} strokeWidth="2.500" /></Icon></button>
      </div>
      <div className="mt-[6px] mr-[2px] ml-[5px] flex items-start justify-center border-t border-[#5c5c5c]">
        <span className="h-[2px] w-2 rounded-b-sm bg-[#b0b0b0]" />
      </div>
    </aside>
  );
}

function Coord({ axis, value }) {
  return (
    <label className="flex items-center gap-1">
      {axis}:
      <input readOnly value={value} className="h-[10px] w-[35px] bg-[#595959] px-px text-[#858585] outline-none" />
    </label>
  );
}

const playback = [
  ["Go to Start", "M3 5v10M16 5l-5 5 5 5zM11 5l-5 5 5 5z"],
  ["Previous Frame", "M9 5l-6 5 6 5zM12 5v10M16 5v10"],
  ["Play", "M4 2l13 8-13 8z"],
  ["Next Frame", "M11 5l6 5-6 5zM8 5v10M4 5v10"],
  ["Go to End", "M17 5v10M4 5l5 5-5 5zM9 5l5 5-5 5z"],
];

const navTools = [
  ["Zoom", <><circle cx="12" cy="8" r="5" /><path d="M9 11l-6 6" strokeWidth="2.500" /></>],
  ["Zoom All", <><path d="M8 2h9v9H8z" fill={T} stroke="none" /><path d="M12.500 2v9M8 6.500h9" stroke="#444" /><path d="M9 10l-6 7" strokeWidth="2.500" /></>],
  ["Zoom Extents", <><path d="M2 7V2h5M13 2h5v5M18 13v5h-5M7 18H2v-5" stroke={T} strokeWidth="2" /><circle cx="10" cy="10" r="5" fill={T} stroke="none" /><Corner /></>],
  ["Zoom Extents All", <><path d="M3 11l8-8 6 2v10l-6 2z" fill={T} stroke="none" /><path d="M6 8l8 6M3 12h10" /><Corner /></>],
  ["Zoom Region", <><path d="M3 4h13v11H3z" stroke={T} strokeDasharray="2 2" /><circle cx="11" cy="9" r="3" /><path d="M8 12l-4 5" /></>],
  ["Pan", <path d="M6 17c-2-3-3-6-2-6l2 2V5h2v5-7h2v7-6h2v6l1-4h2l-1 7-2 4z" fill={W} strokeWidth=".8" />],
  ["Orbit", <><path d="M4 13c0-9 8-11 12-9M5 16c6 1 9-3 9-9" stroke={T} /><path d="M7 12l5-6M6 16l7-5" strokeWidth="3" /><Corner /></>],
  ["Maximize Viewport", <><path d="M2 2h16v16H2z" fill={W} stroke="none" /><path d="M3 11h6v6H3z" fill="#444" stroke="none" /><path d="M9 11l6-6M10 5h5v5" stroke="#333" strokeWidth="2" /></>],
];

function StatusBar() {
  return (
    <footer className="flex h-[34px] items-center gap-1 bg-[#434343] pt-[3px] pl-[3px] pr-1 font-['Roboto',sans-serif] text-[7px] leading-[9px] whitespace-nowrap text-[#dcdcdc]">
      <div className="flex h-[29px] w-[62px] shrink-0 flex-col gap-px">
        <input aria-label="Macro recorder" className="h-[14px] w-full bg-[#dcc4c8] outline-none" />
        <input aria-label="MAXScript listener" readOnly value="Testing for :" className="h-[14px] w-full bg-[#f4f4f4] px-[2px] font-['Liberation_Mono',monospace] text-[7px] text-black outline-none" />
      </div>
      <div className="flex min-w-0 flex-1 flex-col gap-[6px]">
        <p>None Selected</p>
        <p>Click and drag to select and move objects</p>
      </div>
      <div className="flex w-[274px] shrink-0 flex-col gap-px">
        <div className="flex h-[14px] items-center gap-[7px]">
          <Icon size="size-[10px]" label="Isolate"><path d="M3 7V3h4M13 3h4v4M17 13v4h-4M7 17H3v-4M5 5l10 10M15 5L5 15" stroke="#262626" /></Icon>
          <Icon size="size-[10px]" label="Lock"><path d="M5 9h10v8H5zM7 9V4h6v5" stroke="#2a2a2a" /></Icon>
          <Icon size="size-[10px]" label="Absolute mode"><path d="M2 2h16v16H2zM10 2v5M10 13v5M2 10h5M13 10h5" strokeWidth="2" /><path d="M10 6l4 4-4 4-4-4z" strokeWidth="2" /></Icon>
          <Coord axis="X" value="26624,414" />
          <Coord axis="Y" value="0,0mm" />
          <Coord axis="Z" value="16,501mm" />
          <span className="ml-[2px]">Grid = 100,0mm</span>
        </div>
        <button className="ml-48 flex h-[13px] items-center gap-1">
          <span className="flex size-3 items-center justify-center bg-[#4c75b0]">
            <Icon size="size-[10px]"><path d="M10 2l7 4v8l-7 4-7-4V6z" stroke="#b9c8de" /><circle cx="10" cy="10" r="3" /></Icon>
          </span>
          Add Time Tag
        </button>
      </div>
      <div className="flex w-[78px] shrink-0 flex-col gap-px">
        <div className="flex h-[14px] items-center">
          {playback.map(([name, d]) => (
            <button key={name} aria-label={name} className="flex w-[15px] justify-center">
              <svg viewBox="0 0 20 20" className="size-[11px]" fill={W} stroke={W} strokeWidth="1.500"><path d={d} />{name === "Play" && <Corner />}</svg>
            </button>
          ))}
        </div>
        <div className="flex h-[13px] items-center">
          <button aria-label="Key mode" className="flex w-3 justify-center"><svg viewBox="0 0 8 6" className="h-[6px] w-2" fill={W}><path d="M3 0v6L0 3zM5 0v6l3-3z" /></svg></button>
          <label className="relative ml-[2px] flex">
            <input aria-label="Current frame" readOnly value="0" className="h-[10px] w-11 bg-[#5a5a5a] px-[3px] outline-none" />
            <svg viewBox="0 0 4 8" className="absolute top-px right-px h-2 w-1" fill={W}><path d="M0 3l2-3 2 3zM0 5l2 3 2-3z" /></svg>
          </label>
          <button aria-label="Time configuration" className="ml-1"><Icon size="size-3"><circle cx="8" cy="8" r="5.500" fill={W} stroke="none" /><path d="M8 4v4h3" stroke="#333" /><circle cx="14" cy="14" r="3" stroke={O} strokeWidth="2" /></Icon></button>
        </div>
      </div>
      <button aria-label="Set keys" className="flex h-[27px] w-[26px] shrink-0 items-center justify-center bg-[#5c5c5c]">
        <Icon size="size-5"><path d="M9 2v14M2 9h14" stroke="#e6e6e6" strokeWidth="3" /><path d="M13 17l5-5" stroke={T} strokeWidth="2" /><circle cx="12.500" cy="17" r="1.500" stroke={T} /></Icon>
      </button>
      <div className="flex w-7 shrink-0 flex-col gap-[3px]">
        <button className="h-3 bg-[#5a5a5a]">Auto Key</button>
        <button className="h-3 bg-[#5a5a5a]">Set Key</button>
      </div>
      <div className="flex w-[71px] shrink-0 flex-col gap-[3px]">
        <Combo label="Key selection" value="Selected" className="h-3" />
        <div className="flex gap-[3px]">
          <button aria-label="Tangents"><Icon size="size-3"><path d="M3 18c1-8 3-13 7-13s6 5 7 13" stroke={T} strokeWidth="2" /><path d="M2 5h16" strokeWidth="1.200" /><path d="M1 3.500h3v3H1zM16 3.500h3v3h-3zM8.500 3.500h3v3h-3z" fill={T} stroke="none" /></Icon></button>
          <button className="h-3 flex-1 bg-[#5a5a5a]">Key Filters...</button>
        </div>
      </div>
      <div className="ml-[2px] grid shrink-0 grid-cols-4 gap-x-[2px] gap-y-px">
        {navTools.map(([name, art]) => (
          <button key={name} aria-label={name} className="flex h-[13px] w-[13px] items-center justify-center"><Icon size="size-[11px]">{art}</Icon></button>
        ))}
      </div>
    </footer>
  );
}

export default function App() {
  return (
    <div className="flex min-h-screen flex-col overflow-hidden bg-[#444] antialiased select-none">
      <TitleBar />
      <MenuBar />
      <MainToolbar />
      <div className="flex flex-1">
        <SideToolbar />
        <div className="flex min-w-0 flex-1 flex-col">
          <Ribbon />
          <div className="flex flex-1 pl-px">
            <Viewport />
            <CommandPanel />
          </div>
        </div>
      </div>
      <StatusBar />
    </div>
  );
}
